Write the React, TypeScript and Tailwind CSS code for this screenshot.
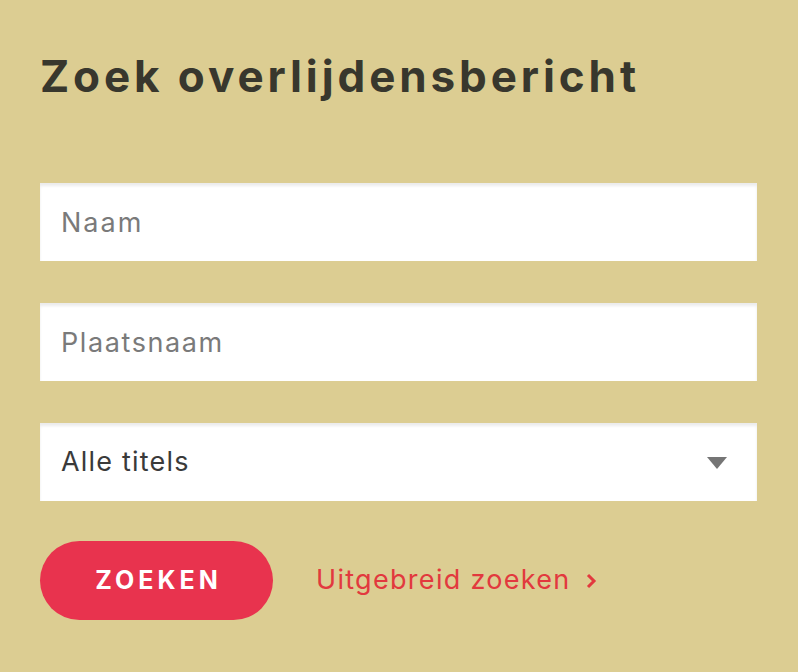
import React from 'react';

export default function App() {
  return (
    <div
      className="w-[798px] h-[672px] bg-[#dccd92] px-10 pt-[46px]"
      style={{ fontFamily: 'Inter, "Noto Sans", sans-serif' }}
    >
      <h1 className="text-[44px] leading-[60px] font-bold text-[#38372d] tracking-[3.9px]">
        Zoek overlijdensbericht
      </h1>

      <form className="mt-[77px] flex flex-col gap-[42px] w-[717px]" onSubmit={(e) => e.preventDefault()}>
        <input
          type="text"
          placeholder="Naam"
          className="h-[78px] w-full bg-white px-[21px] text-[27px] tracking-[2px] text-[#333] placeholder:text-[#7a7a7a] shadow-[inset_0_3px_3px_rgba(0,0,0,0.08)] outline-none"
        />
        <input
          type="text"
          placeholder="Plaatsnaam"
          className="h-[78px] w-full bg-white px-[21px] text-[27px] tracking-[1.6px] text-[#333] placeholder:text-[#7a7a7a] shadow-[inset_0_3px_3px_rgba(0,0,0,0.08)] outline-none"
        />
        <div className="relative h-[78px] w-full bg-white shadow-[inset_0_3px_3px_rgba(0,0,0,0.08)] flex items-center px-[21px]">
          <span className="text-[27px] tracking-[1.2px] text-[#3a3a3a]">Alle titels</span>
          <svg className="absolute right-[30px] top-[34px]" width="20" height="12" viewBox="0 0 20 12">
            <polygon points="0,0 20,0 10,12" fill="#757575" />
          </svg>
        </div>

        <div className="flex items-center gap-[43px] -mt-[2px]">
          <button
            type="submit"
            className="h-[79px] w-[233px] rounded-full bg-[#e8334e] text-white text-[25px] font-bold tracking-[4px] pl-[4px]"
          >
            ZOEKEN
          </button>
          <a href="#" className="flex items-center gap-[14px] text-[27px] tracking-[1.3px] text-[#e2393e]">
            Uitgebreid zoeken
            <svg width="12" height="16" viewBox="0 0 12 16">
              <path d="M3 2 L9 8 L3 14" stroke="#e2393e" strokeWidth="3" fill="none" />
            </svg>
          </a>
        </div>
      </form>
    </div>
  );
}
